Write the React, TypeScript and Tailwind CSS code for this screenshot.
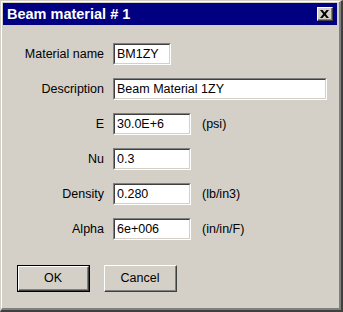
import React from "react";

const font = { fontFamily: '"Liberation Sans", Arial, sans-serif' };

function Field({ w, value }: { w: string; value: string }) {
  return (
    <div className={`${w} h-[22px] border-t border-l border-t-[#808080] border-l-[#808080] border-b border-r border-b-white border-r-white`}>
      <div className="h-full w-full border-t border-l border-t-[#404040] border-l-[#404040] border-b border-r border-b-[#d4d0c8] border-r-[#d4d0c8] bg-white flex items-center pl-[2px] text-[12.5px] text-black leading-none whitespace-nowrap overflow-hidden">
        {value}
      </div>
    </div>
  );
}

function Row({ label, w, value, unit }: { label: string; w: string; value: string; unit?: string }) {
  return (
    <div className="flex items-center h-[22px]">
      <span className="w-[101px] text-right text-[12.5px] text-black leading-none whitespace-nowrap">{label}</span>
      <div className="ml-[9px]">
        <Field w={w} value={value} />
      </div>
      {unit && <span className="ml-[11px] text-[12.5px] text-black leading-none whitespace-nowrap">{unit}</span>}
    </div>
  );
}

function Btn({ label, def }: { label: string; def?: boolean }) {
  const inner = (
    <div className="h-full w-full border-t border-l border-t-white border-l-white border-b border-r border-b-[#404040] border-r-[#404040]">
      <div className="h-full w-full border-b border-r border-b-[#808080] border-r-[#808080] flex items-center justify-center text-[12.5px] text-black leading-none">
        {label}
      </div>
    </div>
  );
  return def ? (
    <div className="w-[73px] h-[27px] border border-black">{inner}</div>
  ) : (
    <div className="w-[73px] h-[27px]">{inner}</div>
  );
}

export default function App() {
  return (
    <div style={font} className="w-[343px] h-[312px] bg-[#d4d0c8] border-t border-l border-t-[#d4d0c8] border-l-[#d4d0c8] border-r-2 border-b-2 border-r-[#404040] border-b-[#404040]">
      <div className="h-full w-full border-t border-l border-t-white border-l-white border-r-2 border-b-2 border-r-[#808080] border-b-[#808080] pt-px pl-px pr-[2px] pb-[2px] flex flex-col">
        <div className="h-[22px] bg-[#000080] flex items-center justify-between pl-[4px] pr-[4px]">
          <span className="text-white font-bold text-[14.5px] leading-none whitespace-nowrap">Beam material # 1</span>
          <div className="w-[16px] h-[14px] bg-[#d4d0c8] border-t border-l border-t-white border-l-white border-b border-r border-b-[#404040] border-r-[#404040]">
            <div className="h-full w-full border-b border-r border-b-[#808080] border-r-[#808080] flex items-center justify-center">
              <svg width="9" height="8" viewBox="0 0 9 8">
                <path d="M0 0h2.5L4.5 2.6 6.5 0H9L5.8 4 9 8H6.5L4.5 5.4 2.5 8H0l3.2-4z" fill="#000" />
              </svg>
            </div>
          </div>
        </div>
        <div className="pt-[18px] flex flex-col gap-[13px]">
          <Row label="Material name" w="w-[58px]" value="BM1ZY" />
          <Row label="Description" w="w-[214px]" value="Beam Material 1ZY" />
          <Row label="E" w="w-[78px]" value="30.0E+6" unit="(psi)" />
          <Row label="Nu" w="w-[78px]" value="0.3" />
          <Row label="Density" w="w-[78px]" value="0.280" unit="(lb/in3)" />
          <Row label="Alpha" w="w-[78px]" value="6e+006" unit="(in/in/F)" />
        </div>
        <div className="mt-[25px] pl-[14px] flex gap-[14px]">
          <Btn label="OK" def />
          <Btn label="Cancel" />
        </div>
      </div>
    </div>
  );
}
